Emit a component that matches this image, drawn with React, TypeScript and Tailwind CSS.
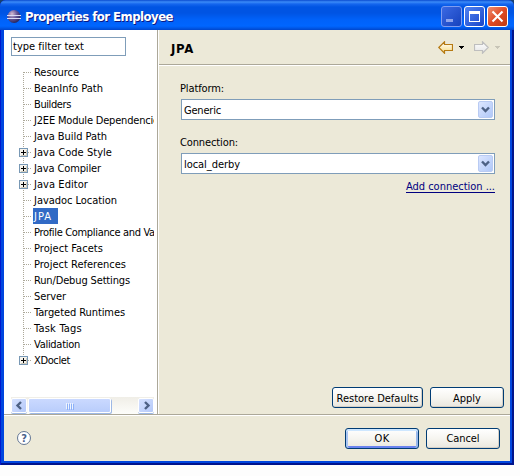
import { useLayoutEffect, useRef } from "react";

type FitProps = { text: string; w: number; className?: string };

// Single line of text whose tracking is adjusted to occupy a given width.
function Fit({ text, w, className = "" }: FitProps) {
  const ref = useRef<HTMLSpanElement>(null);
  useLayoutEffect(() => {
    const el = ref.current;
    if (!el) return;
    el.style.letterSpacing = "0px";
    const natural = el.getBoundingClientRect().width;
    el.style.letterSpacing = `${(w - natural) / text.length}px`;
  }, [text, w]);
  return (
    <span ref={ref} className={`inline-block shrink-0 whitespace-pre ${className}`}>
      {text}
    </span>
  );
}

type Item = { label: string; w: number; plus?: boolean; selected?: boolean };

const items: Item[] = [
  { label: "Resource", w: 45 },
  { label: "BeanInfo Path", w: 69 },
  { label: "Builders", w: 37 },
  { label: "J2EE Module Dependencies", w: 130 },
  { label: "Java Build Path", w: 73 },
  { label: "Java Code Style", w: 78, plus: true },
  { label: "Java Compiler", w: 67, plus: true },
  { label: "Java Editor", w: 54, plus: true },
  { label: "Javadoc Location", w: 83 },
  { label: "JPA", w: 18, selected: true },
  { label: "Profile Compliance and Validation", w: 155 },
  { label: "Project Facets", w: 69 },
  { label: "Project References", w: 92 },
  { label: "Run/Debug Settings", w: 96 },
  { label: "Server", w: 32 },
  { label: "Targeted Runtimes", w: 91 },
  { label: "Task Tags", w: 48 },
  { label: "Validation", w: 46 },
  { label: "XDoclet", w: 36, plus: true },
];

function Branch({ plus, first, last }: { plus?: boolean; first: boolean; last: boolean }) {
  return (
    <svg width="21" height="16" className="shrink-0" shapeRendering="crispEdges">
      {!first && <path d="M12.5 0V8" stroke="#aca899" strokeDasharray="1 1" />}
      {!last && <path d="M12.5 8V16" stroke="#aca899" strokeDasharray="1 1" />}
      <path d="M13 8.5H21" stroke="#aca899" strokeDasharray="1 1" />
      {plus && (
        <>
          <rect x="8.5" y="4.5" width="8" height="8" fill="#f5f3ed" stroke="#7898b5" />
          <path d="M15.5 6V12M10 11.5H16" stroke="#cfcabb" />
          <path d="M10 8.5H15M12.5 6V11" stroke="#000" />
        </>
      )}
    </svg>
  );
}

function Chevron({ d }: { d: string }) {
  return (
    <svg width="9" height="9" viewBox="0 0 9 9">
      <path d={d} fill="none" stroke="#4d6185" strokeWidth="2.4" />
    </svg>
  );
}

function Combo({ value, w }: { value: string; w: number }) {
  return (
    <div className="flex h-[21px] w-[314px] items-center justify-between border border-[#7f9db9] bg-white pr-px pl-[2px]">
      <Fit text={value} w={w} className="mt-px leading-[19px]" />
      <div className="flex h-[17px] w-[15px] items-center justify-center rounded-[2px] border border-[#b9cbf3] bg-linear-to-br from-[#dce6ff] to-[#b0c8f8]">
        <Chevron d="M1 2.5L4.5 6L8 2.5" />
      </div>
    </div>
  );
}

function Button({ text, w, size, primary }: { text: string; w: number; size: string; primary?: boolean }) {
  return (
    <button
      className={`flex h-[21px] ${size} items-center justify-center rounded-[3px] border border-[#003c74] bg-linear-to-b from-white via-[#f6f5f0] to-[#eae7de] leading-[19px] ${
        primary
          ? "shadow-[inset_0_2px_0_#cee7ff,inset_2px_0_0_#a9c5f3,inset_-2px_0_0_#98b8ea,inset_0_-2px_0_#6982ee]"
          : "shadow-[inset_-1px_-1px_0_#d6d0c5]"
      }`}
    >
      <Fit text={text} w={w} className="mt-px" />
    </button>
  );
}

function Arrow({ back }: { back?: boolean }) {
  return (
    <svg width="15" height="13" viewBox="0 0 15 13">
      <defs>
        <linearGradient id={back ? "gold" : "silver"} x1="0" y1="0" x2="0" y2="1">
          <stop offset="0" stopColor="#fff" />
          <stop offset="1" stopColor={back ? "#f8dc80" : "#e4e4e4"} />
        </linearGradient>
      </defs>
      <path
        d={back ? "M.8 6.5L6.5 .8V3.5H14.5V9.5H6.5V12.2Z" : "M14.2 6.5L8.5 .8V3.5H.5V9.5H8.5V12.2Z"}
        fill={back ? "url(#gold)" : "url(#silver)"}
        stroke={back ? "#b67a13" : "#bebebe"}
        strokeWidth="1.2"
      />
    </svg>
  );
}

function Caret({ color }: { color: string }) {
  return (
    <svg width="5" height="3" shapeRendering="crispEdges">
      <path d="M0 0H5V1H4V2H3V3H2V2H1V1H0Z" fill={color} />
    </svg>
  );
}

function TitleBar() {
  return (
    <div className="flex h-[30px] shrink-0 items-center rounded-t-[6px] bg-[linear-gradient(180deg,#0a4bd0_0px,#3b8bf8_2px,#1566ee_4px,#0054e3_7px,#0054e3_13px,#0062fa_20px,#0066ff_26px,#0058e8_28px,#0046cc_30px)] pr-[6px] pl-[7px]">
      <svg width="15" height="15" viewBox="0 0 15 15" className="mt-[2px]">
        <defs>
          <radialGradient id="orb" cx=".35" cy=".3" r=".75">
            <stop offset="0" stopColor="#d6bcd0" />
            <stop offset=".5" stopColor="#65579a" />
            <stop offset="1" stopColor="#252257" />
          </radialGradient>
        </defs>
        <circle cx="7" cy="7.5" r="6.5" fill="url(#orb)" />
        <path d="M0 6.5H14M0 9.5H14" stroke="#dbdcf4" />
      </svg>
      <Fit
        text="Properties for Employee"
        w={148}
        className="mt-[4px] ml-[3px] font-['DejaVu_Sans_Condensed','DejaVu_Sans',sans-serif] text-[13px] leading-[16px] font-bold text-white [text-shadow:1px_1px_0_#0a1883] [font-stretch:condensed]"
      />
      <div className="mt-[3px] ml-auto flex gap-[2px]">
        <div className="flex h-[21px] w-[21px] items-end rounded-[3px] border border-[#7f9cf0] bg-linear-to-br from-[#3a69e4] to-[#1742bd] pb-[4px] pl-[4px]">
          <div className="h-[3px] w-[7px] bg-[#8ea4ed]" />
        </div>
        <div className="flex h-[21px] w-[21px] items-center justify-center rounded-[3px] border border-white bg-linear-to-br from-[#5182f2] to-[#1a44c8]">
          <div className="h-[11px] w-[11px] border border-t-[3px] border-white" />
        </div>
        <div className="flex h-[21px] w-[21px] items-center justify-center rounded-[3px] border border-white bg-linear-to-br from-[#ee8b6d] via-[#df4a24] to-[#c03a12]">
          <svg width="13" height="13" viewBox="0 0 13 13">
            <path d="M1.5 1.5L11.5 11.5M11.5 1.5L1.5 11.5" stroke="#fff" strokeWidth="2.1" />
          </svg>
        </div>
      </div>
    </div>
  );
}

function ScrollButton({ d }: { d: string }) {
  return (
    <div className="flex h-[15px] w-[16px] items-center justify-center rounded-[2px] border border-white bg-linear-to-br from-[#d5e1ff] to-[#b5c9f9] shadow-[0_1px_0_#9db8e5]">
      <Chevron d={d} />
    </div>
  );
}

function Sidebar() {
  return (
    <div className="flex w-[153px] shrink-0 flex-col bg-white pt-[7px] pr-[3px] pl-[7px]">
      <div className="h-[19px] w-[115px] shrink-0 border border-[#7f9db9] pl-px">
        <Fit text="type filter text" w={71} className="leading-[18px]" />
      </div>
      <div className="mt-[8px] w-[143px] overflow-hidden">
        {items.map((item, i) => (
          <div key={item.label} className="flex h-[16px]">
            <Branch plus={item.plus} first={i === 0} last={i === items.length - 1} />
            <div
              className={`ml-px flex h-[16px] shrink-0 pl-px ${
                item.selected ? "w-[25px] bg-[#316ac5] text-white" : ""
              }`}
            >
              <Fit text={item.label} w={item.w} className="pt-px leading-[16px]" />
            </div>
          </div>
        ))}
      </div>
      <div className="mt-auto flex h-[17px] items-center bg-linear-to-b from-[#f0eee7] to-[#fdfdfa]">
        <ScrollButton d="M6 1L2.5 4.5L6 8" />
        <div className="ml-px flex h-[15px] w-[83px] items-center justify-center gap-px rounded-[2px] border border-white bg-linear-to-b from-[#cad9ff] to-[#b9cdfb] shadow-[1px_1px_0_#9db8e5]">
          {[0, 1, 2, 3].map((n) => (
            <div key={n} className="h-[6px] w-px bg-[#eef4fe] shadow-[1px_1px_0_#8cb0f8]" />
          ))}
        </div>
        <div className="ml-auto">
          <ScrollButton d="M3 1L6.5 4.5L3 8" />
        </div>
      </div>
    </div>
  );
}

export default function App() {
  return (
    <div className="h-[476px] w-[520px] overflow-hidden bg-[#fdfdfd] font-['DejaVu_Sans_Condensed','DejaVu_Sans',sans-serif] text-[11px] text-black [font-stretch:condensed]">
      <div className="h-[465px] w-[514px] bg-[linear-gradient(180deg,#17406f_0px,#17406f_12px,#001ea0_12px)]">
        <div className="flex h-[465px] w-[514px] flex-col rounded-t-[6px] bg-[#0046df] shadow-[inset_1px_0_0_#0019cf,inset_-2px_-2px_0_#00138c]">
          <TitleBar />
          <div className="mx-[4px] mb-[4px] flex flex-1 flex-col bg-[#ece9d8]">
            <div className="flex h-[384px]">
              <Sidebar />
              <div className="w-[2px] border-r border-l border-r-white border-l-[#aca899]" />
              <main className="flex flex-1 flex-col">
                <header className="flex h-[36px] items-center border-b border-white pl-[12px] shadow-[inset_0_-1px_0_#aca899]">
                  <Fit text="JPA" w={23} className="mt-[2px] text-[13px] font-bold" />
                  <div className="mr-[10px] ml-auto flex items-center">
                    <Arrow back />
                    <div className="ml-[6px]">
                      <Caret color="#000" />
                    </div>
                    <div className="ml-[10px]">
                      <Arrow />
                    </div>
                    <div className="ml-[6px]">
                      <Caret color="#c8c5b7" />
                    </div>
                  </div>
                </header>
                <div className="flex flex-1 flex-col pl-[22px]">
                  <Fit text="Platform:" w={44} className="mt-[15px] ml-[-1px] h-[16px] self-start leading-[16px]" />
                  <div className="mt-[2px]">
                    <Combo value="Generic" w={37} />
                  </div>
                  <Fit text="Connection:" w={58} className="mt-[15px] ml-[-1px] h-[16px] self-start leading-[16px]" />
                  <div className="mt-[2px]">
                    <Combo value="local_derby" w={56} />
                  </div>
                  <a className="mt-[5px] mr-[15px] h-[14px] self-end border-b border-[#000080] text-[#000080]">
                    <Fit text="Add connection ..." w={89} className="leading-[14px]" />
                  </a>
                  <div className="mt-auto mr-[6px] mb-[6px] flex justify-end gap-[7px]">
                    <Button text="Restore Defaults" w={82} size="w-[91px]" />
                    <Button text="Apply" w={28} size="w-[74px]" />
                  </div>
                </div>
              </main>
            </div>
            <footer className="flex flex-1 items-center border-t border-[#aca899] pr-[10px] pl-[13px] shadow-[inset_0_1px_0_#fff]">
              <div className="flex h-[14px] w-[14px] items-center justify-center rounded-full border border-[#647794] bg-white text-[11px] leading-none font-bold text-[#49618a]">
                ?
              </div>
              <div className="ml-auto flex gap-[7px]">
                <Button text="OK" w={15} size="w-[74px]" primary />
                <Button text="Cancel" w={33} size="w-[74px]" />
              </div>
            </footer>
          </div>
        </div>
      </div>
    </div>
  );
}
